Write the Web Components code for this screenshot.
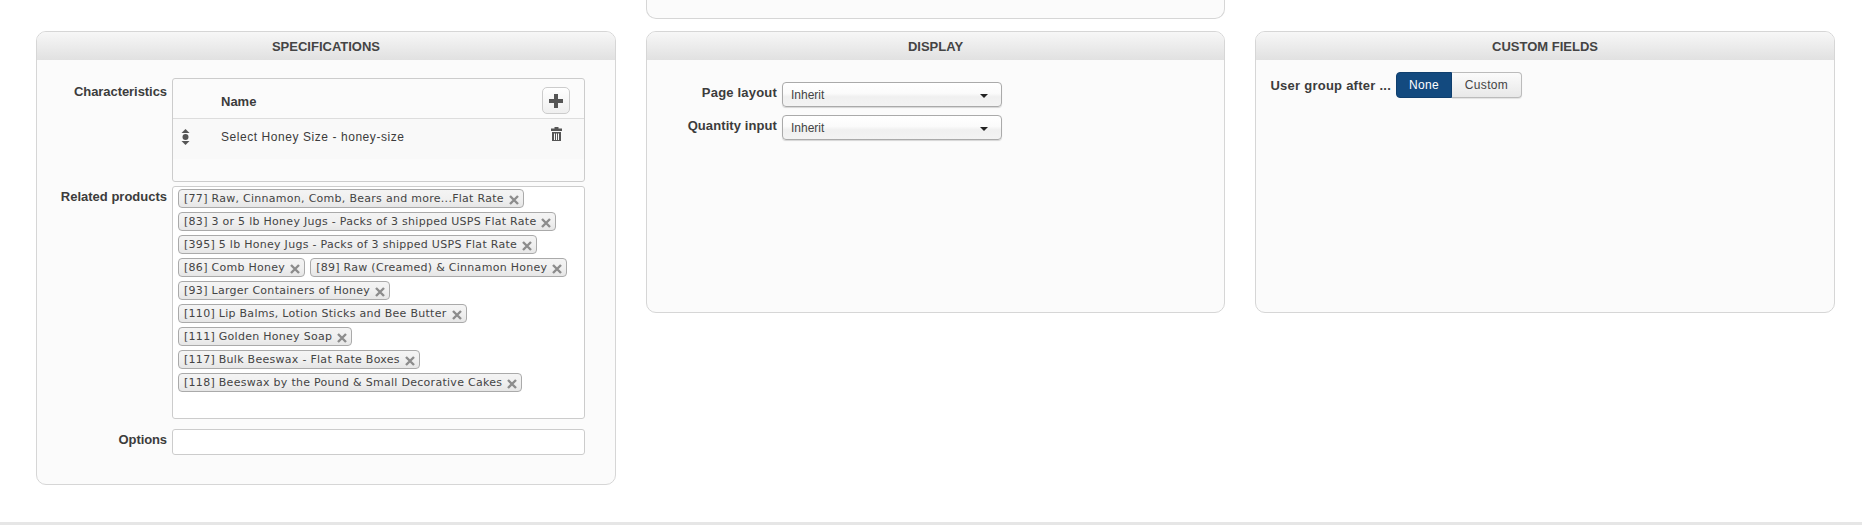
<!DOCTYPE html>
<html>
<head>
<meta charset="utf-8">
<title>Specifications</title>
<style>
    html, body { margin: 0; padding: 0; background: #fff; }
    body { font-family: "Liberation Sans", Arial, sans-serif; font-size: 13px; color: #333; height: 525px; overflow: hidden; }
    .panel-grid {
        display: grid;
        grid-template-columns: 580px 579px 580px;
        grid-template-rows: 18px 454px;
        column-gap: 30px;
        row-gap: 13px;
        padding-left: 36px;
        align-items: start;
    }
    .stub { grid-column: 2; grid-row: 1; }
    .specifications { grid-column: 1; grid-row: 2; }
    .display { grid-column: 2; grid-row: 2; }
    .custom { grid-column: 3; grid-row: 2; }
</style>
</head>
<body>
<page-body>
    <div class="panel-grid">
        <panel-stub class="stub"></panel-stub>

        <form-panel class="specifications" title="SPECIFICATIONS" height="454">
            <form-field label="Characteristics" spacing="-.06">
                <characteristics-table name="Select Honey Size - honey-size"></characteristics-table>
            </form-field>
            <form-field label="Related products" label-top="3">
                <tag-box>
                    <product-tag>[77] Raw, Cinnamon, Comb, Bears and more...Flat Rate</product-tag>
                    <product-tag>[83] 3 or 5 lb Honey Jugs - Packs of 3 shipped USPS Flat Rate</product-tag>
                    <product-tag>[395] 5 lb Honey Jugs - Packs of 3 shipped USPS Flat Rate</product-tag>
                    <product-tag>[86] Comb Honey</product-tag>
                    <product-tag>[89] Raw (Creamed) &amp; Cinnamon Honey</product-tag>
                    <product-tag>[93] Larger Containers of Honey</product-tag>
                    <product-tag>[110] Lip Balms, Lotion Sticks and Bee Butter</product-tag>
                    <product-tag>[111] Golden Honey Soap</product-tag>
                    <product-tag>[117] Bulk Beeswax - Flat Rate Boxes</product-tag>
                    <product-tag>[118] Beeswax by the Pound &amp; Small Decorative Cakes</product-tag>
                </tag-box>
            </form-field>
            <form-field label="Options" gap="10" label-top="3" spacing="-.1">
                <text-box></text-box>
            </form-field>
        </form-panel>

        <form-panel class="display" title="DISPLAY" height="282" top="22">
            <form-field label="Page layout" label-top="3" spacing=".2">
                <select-box>Inherit</select-box>
            </form-field>
            <form-field label="Quantity input" gap="8" label-top="3" spacing=".09">
                <select-box>Inherit</select-box>
            </form-field>
        </form-panel>

        <form-panel class="custom" title="CUSTOM FIELDS" height="282" top="12">
            <form-field label="User group after ..." label-width="135" spacing=".25">
                <toggle-group></toggle-group>
            </form-field>
        </form-panel>
    </div>
</page-body>
<page-rule></page-rule>

<script>
/// Card with a grey gradient title bar. Used for each block of the edit form.
class FormPanel extends HTMLElement {
    connectedCallback() {
        const title = this.getAttribute("title")
        this.removeAttribute("title")
        const height = this.getAttribute("height")
        const top = this.getAttribute("top") || 18
        const shadow = this.attachShadow({mode: "open"})
        shadow.innerHTML = `
            <style>
                :host {
                    display: flex;
                    flex-direction: column;
                    box-sizing: border-box;
                    height: ${height}px;
                    background: #fbfbfb;
                    border: 1px solid #d6d6d6;
                    border-radius: 10px;
                    overflow: hidden;
                }
                header {
                    height: 28px;
                    line-height: 29px;
                    text-align: center;
                    font-size: 13px;
                    font-weight: 700;
                    color: #444;
                    background: linear-gradient(#f7f7f7, #e1e1e1);
                    text-transform: uppercase;
                }
                .body {
                    display: flex;
                    flex-direction: column;
                    padding-top: ${top}px;
                }
            </style>
            <header>${title}</header>
            <div class="body"><slot></slot></div>
        `
    }
}

/// The bottom of a panel that scrolled off the top of the page.
class PanelStub extends HTMLElement {
    constructor() {
        super()
        this.attachShadow({mode: "open"}).innerHTML = `
            <style>
                :host {
                    display: block;
                    box-sizing: border-box;
                    height: 19px;
                    background: #fbfbfb;
                    border: 1px solid #d6d6d6;
                    border-top: 0;
                    border-radius: 0 0 10px 10px;
                }
            </style>
        `
    }
}

/// Right-aligned label next to a control.
class FormField extends HTMLElement {
    connectedCallback() {
        const label = this.getAttribute("label")
        const labelWidth = this.getAttribute("label-width") || 130
        const labelTop = this.getAttribute("label-top") || 6
        const spacing = this.getAttribute("spacing") || 0
        const gap = this.getAttribute("gap") || 4
        const shadow = this.attachShadow({mode: "open"})
        shadow.innerHTML = `
            <style>
                :host { display: flex; align-items: flex-start; margin-top: ${gap}px; }
                :host(:first-child) { margin-top: 0; }
                label {
                    flex: none;
                    box-sizing: border-box;
                    width: ${labelWidth}px;
                    padding-top: ${labelTop}px;
                    text-align: right;
                    font-size: 13px;
                    line-height: 16px;
                    font-weight: 700;
                    letter-spacing: ${spacing}px;
                    color: #3c3c3c;
                    white-space: nowrap;
                }
                .control { margin-left: 5px; }
            </style>
            <label>${label}</label>
            <div class="control"><slot></slot></div>
        `
    }
}

class CharacteristicsTable extends HTMLElement {
    connectedCallback() {
        const name = this.getAttribute("name")
        const shadow = this.attachShadow({mode: "open"})
        shadow.innerHTML = `
            <style>
                :host {
                    display: block;
                    box-sizing: border-box;
                    width: 413px;
                    height: 104px;
                    border: 1px solid #ccc;
                    border-radius: 3px;
                    background: #fbfbfb;
                    color: #3c3c3c;
                }
                .head, .row { display: flex; position: relative; padding-left: 48px; }
                .head {
                    height: 39px;
                    line-height: 46px;
                    font-weight: 700;
                    font-size: 13px;
                    border-bottom: 1px solid #ddd;
                }
                .row {
                    height: 40px;
                    line-height: 36px;
                    font-size: 12px;
                    letter-spacing: .56px;
                    background: #f9f9f9;
                }
                button {
                    position: absolute;
                    left: 369px;
                    top: 8px;
                    width: 28px;
                    height: 27px;
                    padding: 0;
                    display: flex;
                    align-items: center;
                    justify-content: center;
                    background: linear-gradient(#fff, #efefef);
                    border: 1px solid #ccc;
                    border-radius: 5px;
                }
                svg { display: block; }
                .sort { position: absolute; left: 8px; top: 10px; }
                .trash { position: absolute; left: 378px; top: 8px; }
            </style>
            <div class="head">
                Name
                <button aria-label="Add">
                    <svg width="14" height="14" viewBox="0 0 14 14"><path fill="#555" d="M5 0h4v5h5v4H9v5H5V9H0V5h5z"/></svg>
                </button>
            </div>
            <div class="row">
                <svg class="sort" width="9" height="16" viewBox="0 0 9 16"><path fill="#555" d="M4.500 0 8.500 4H.5zM4.500 16l4-4H.5z"/><circle cx="4.500" cy="8" r="3" fill="#555"/></svg>
                ${name}
                <svg class="trash" width="11" height="14" viewBox="0 0 11 14"><path fill="#555" fill-rule="evenodd" d="M3.500 0h4v1.500H11V4H0V1.500h3.500zM1 5h9v9H1zM3 6.500V13h1V6.500zM5 6.500V13h1V6.500zM7 6.500V13h1V6.500z"/></svg>
            </div>
        `
    }
}

class TagBox extends HTMLElement {
    constructor() {
        super()
        this.attachShadow({mode: "open"}).innerHTML = `
            <style>
                :host {
                    display: flex;
                    flex-wrap: wrap;
                    align-content: flex-start;
                    gap: 4px 5px;
                    box-sizing: border-box;
                    width: 413px;
                    height: 233px;
                    padding: 2px 5px;
                    background: #fff;
                    border: 1px solid #ccc;
                    border-radius: 3px;
                }
            </style>
            <slot></slot>
        `
    }
}

class ProductTag extends HTMLElement {
    constructor() {
        super()
        this.attachShadow({mode: "open"}).innerHTML = `
            <style>
                :host {
                    display: inline-flex;
                    align-items: center;
                    box-sizing: border-box;
                    height: 19px;
                    padding: 0 4px 0 5px;
                    font-family: "DejaVu Sans", Verdana, sans-serif;
                    font-size: 11px;
                    letter-spacing: .28px;
                    color: #444;
                    white-space: nowrap;
                    background: linear-gradient(#f4f4f4 0%, #f0f0f0 50%, #e6e6e6 100%);
                    border: 1px solid #aaa;
                    border-radius: 4px;
                }
                svg { margin: 2px 0 0 5px; display: block; }
            </style>
            <slot></slot>
            <svg width="10" height="10" viewBox="0 0 10 10"><path stroke="#8c8c8c" stroke-width="2.400" d="M1 1l8 8M9 1l-8 8"/></svg>
        `
    }
}

class TextBox extends HTMLElement {
    constructor() {
        super()
        this.attachShadow({mode: "open"}).innerHTML = `
            <style>
                :host {
                    display: block;
                    box-sizing: border-box;
                    width: 413px;
                    height: 26px;
                    background: #fff;
                    border: 1px solid #ccc;
                    border-radius: 3px;
                }
            </style>
        `
    }
}

class SelectBox extends HTMLElement {
    constructor() {
        super()
        this.attachShadow({mode: "open"}).innerHTML = `
            <style>
                :host {
                    display: flex;
                    align-items: center;
                    justify-content: space-between;
                    box-sizing: border-box;
                    width: 220px;
                    height: 25px;
                    padding: 1px 13px 0 8px;
                    font-size: 12px;
                    color: #444;
                    background: linear-gradient(#fff 0%, #fbfbfb 45%, #f0f0f0 60%, #f3f3f3 100%);
                    border: 1px solid #aaa;
                    border-radius: 4px;
                    box-shadow: 0 1px 1px rgba(0, 0, 0, .15);
                }
                i { width: 0; height: 0; border: 4px solid transparent; border-top-color: #222; border-bottom: 0; margin-top: 2px; }
            </style>
            <span><slot></slot></span>
            <i></i>
        `
    }
}

class ToggleGroup extends HTMLElement {
    constructor() {
        super()
        this.attachShadow({mode: "open"}).innerHTML = `
            <style>
                :host { display: inline-flex; height: 26px; font-size: 12px; letter-spacing: .35px; line-height: 25px; text-align: center; }
                span { display: block; box-sizing: border-box; height: 26px; border: 1px solid #bbb; }
                .on {
                    width: 56px;
                    color: #fff;
                    background: #134a7f;
                    border-color: #0f3f6e;
                    border-radius: 4px 0 0 4px;
                }
                .off {
                    width: 70px;
                    color: #444;
                    background: linear-gradient(#fbfbfb, #e8e8e8);
                    border-left: 0;
                    border-radius: 0 4px 4px 0;
                    box-shadow: 0 1px 1px rgba(0, 0, 0, .1);
                }
            </style>
            <span class="on">None</span><span class="off">Custom</span>
        `
    }
}

class PageBody extends HTMLElement {
    constructor() {
        super()
        this.attachShadow({mode: "open"}).innerHTML = `
            <style>:host { display: block; height: 522px; overflow: hidden; }</style>
            <slot></slot>
        `
    }
}

class PageRule extends HTMLElement {
    constructor() {
        super()
        this.attachShadow({mode: "open"}).innerHTML = `
            <style>:host { display: block; height: 3px; background: #e6e6e6; }</style>
        `
    }
}

customElements.define("form-panel", FormPanel)
customElements.define("panel-stub", PanelStub)
customElements.define("form-field", FormField)
customElements.define("characteristics-table", CharacteristicsTable)
customElements.define("tag-box", TagBox)
customElements.define("product-tag", ProductTag)
customElements.define("text-box", TextBox)
customElements.define("select-box", SelectBox)
customElements.define("toggle-group", ToggleGroup)
customElements.define("page-body", PageBody)
customElements.define("page-rule", PageRule)
</script>
</body>
</html>
